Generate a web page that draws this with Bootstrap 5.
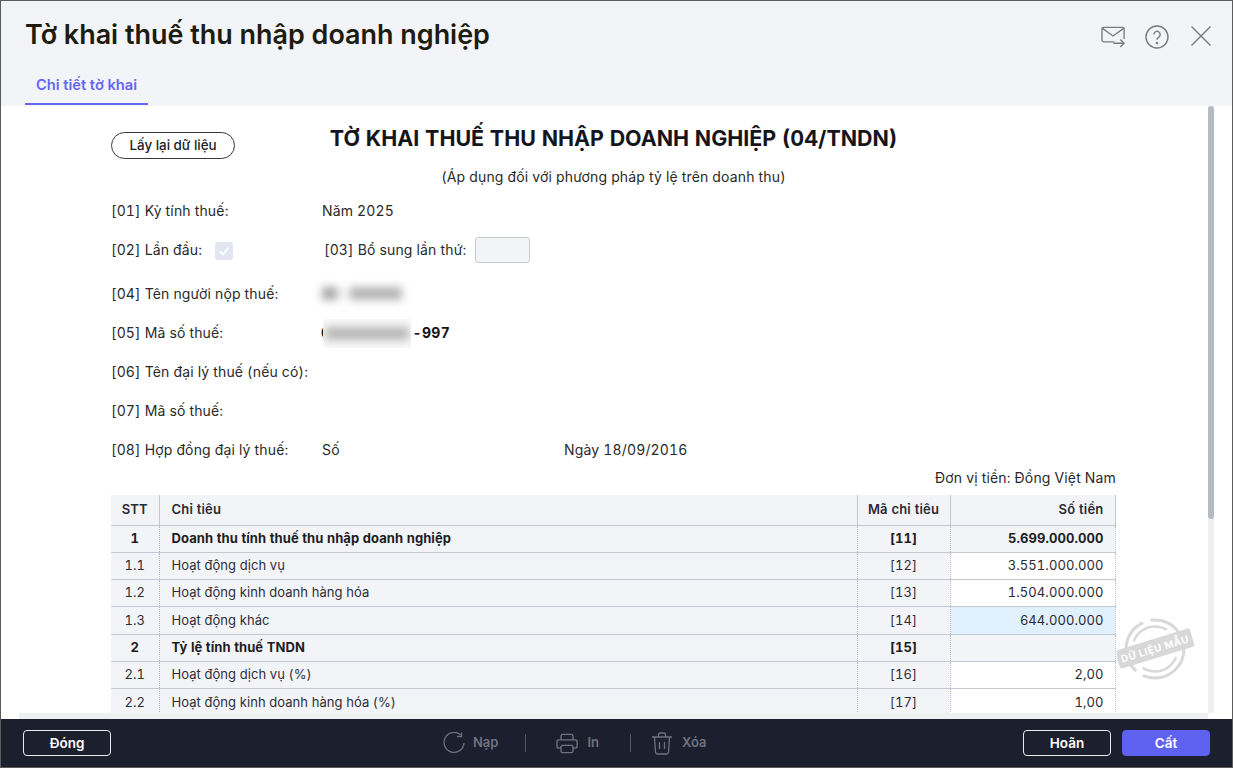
<!doctype html>
<html lang="vi">
<head>
<meta charset="utf-8">
<title>Tờ khai thuế thu nhập doanh nghiệp</title>
<link rel="stylesheet" href="https://cdn.jsdelivr.net/npm/bootstrap@5.3.0/dist/css/bootstrap.min.css">
<style>
html,body{height:100%;margin:0;overflow:hidden;background:#fff}
body{font-family:Inter,"Liberation Sans",sans-serif;font-size:14px;color:#212529}
.shell{height:768px;border:1px solid #5c5c5c;background:#fff}
.head-area{height:105px;background:#f3f4f8}
.title-row{padding:16px 20px 0 24px;height:68px}
.page-title{font-size:26.95px;font-weight:600;line-height:36px;margin:0;color:#1c1c10}
.tool-icon{color:#7a7a7a;display:block}
.tab-line{padding-left:24px}
.tab-item{width:123px;height:36px;border-bottom:2px solid #6366f1;color:#6366f1;font-size:14.7px;font-weight:600;line-height:32px;text-align:center;display:block;text-decoration:none}
.body-area{height:612px;overflow:hidden}
.sheet{width:1005px;margin-left:110px;padding-top:26px;color:#2a2a2a;letter-spacing:.16px;font-variant-numeric:tabular-nums}
.refetch{width:124px;height:27px;padding:0;border:1px solid #33363f;border-radius:14px;background:#fff;font-size:13.4px;font-weight:500;color:#1d1d1d;letter-spacing:0}
.refetch-slot{width:124px;flex:none}
.sheet-title{font-size:21.45px;font-weight:700;line-height:27px;margin:-7px 0 0;color:#15151c;text-align:center;letter-spacing:0}
.sheet-sub{text-align:center;line-height:20px;margin-top:8px;height:20px}
.form-line{height:39px;line-height:20px;padding-top:9px}
.line-first{height:37px;margin-top:5px}
.line-second{height:44px;padding-top:11px}
.line-third{height:41px;padding-top:11px}
.form-lab{width:211px;flex:none}
.check-off{width:18px;height:18px;border-radius:2px;background:#e3e6f0;margin:2px 0 0 13px}
.num-box{width:55px;height:26px;border:1px solid #c6cad3;border-radius:3px;background:#f3f4f8;margin:-3px 0 0 9px}
.blur-name{width:80px;height:13px;margin-top:3px;filter:blur(4px);background:linear-gradient(90deg,#a8a8a8 0 16%,#fff 24% 30%,#b4b4b4 38% 100%)}
.blur-wrap{position:relative;height:20px;width:129px;margin-left:-1px;font-weight:700;color:#15151c;letter-spacing:.3px}
.blur-zone{position:absolute;left:2px;top:-4px;width:88px;height:29px;background:#fafafa;overflow:hidden}
.blur-zone i{display:block;height:13px;margin:8px 2px 0;background:#b4b4b4;filter:blur(5px)}
.unit-line{text-align:right;line-height:20px;height:20px;margin-top:-2px}
.tax-grid{width:1004px;border-collapse:collapse;table-layout:fixed;margin:7px 0 0;letter-spacing:.07px;font-size:13px}
.tax-grid th,.tax-grid td{padding:0 11px 0 12px;height:27.3px;border-bottom:1px solid #c4c8d2;border-right:1px dotted #b8bcc6;vertical-align:middle;background:#f3f4f8;color:#2e2e38;font-weight:400}
.tax-grid th{height:30px;font-weight:600;border-right:1px solid #c4c8d2;color:#2a2a33;letter-spacing:.2px}
.tax-grid tr>:first-child{text-align:center;padding:0}
.tax-grid tr>:nth-child(3){text-align:center;padding:0}
.tax-grid tr>:last-child{text-align:right}
.tax-grid .sum-row td{font-weight:700;color:#1d1d24}
.tax-grid td.money-in{background:#fff;color:#2a2a33}
.tax-grid td.money-on{background:#e1f0fd;color:#2a2a33}
.bar-v{position:absolute;left:1207px;top:105px;width:6px;height:607px;background:#f0f0f0}
.bar-v i{display:block;height:413px;background:#b6bac4;border-radius:3px}
.bar-h{position:absolute;left:18px;top:712px;width:1189px;height:6px;background:#eff0f2}
.stamp{position:absolute;left:1116px;top:615px;color:#d8d8d8}
.foot-area{height:48px;background:#1c1f2e;padding:0 22px;position:absolute;left:0;top:718px;width:1231px}
.btn-dim{width:88px;height:26px;padding:0;font-size:13.5px;font-weight:600;line-height:22px;border-radius:4px}
.btn-line{border:1px solid #e9e9ee;color:#fff;background:transparent}
.btn-fill{border:1px solid #5f61f0;background:#5f61f0;color:#fff}
.mid-tools{color:#6f7280;font-size:13px;font-weight:600;position:absolute;left:442px;top:0;height:48px}
.v-sep{width:1px;height:18px;background:#545765}
</style>
</head>
<body>
<div class="shell position-relative">
  <header class="head-area">
    <div class="title-row d-flex justify-content-between">
      <h1 class="page-title">Tờ khai thuế thu nhập doanh nghiệp</h1>
      <div class="d-flex align-items-start" style="padding-top:8px;gap:21px">
        <svg class="tool-icon" style="margin-right:-2px" width="25" height="24" viewBox="0 0 26 24" fill="none" stroke="currentColor" stroke-width="1.4"><path d="M24 14V3.5A1.5 1.5 0 0 0 22.500 2H2.500A1.500 1.500 0 0 0 1 3.500V15.500A1.500 1.500 0 0 0 2.500 17H14"/><path d="M1.500 3L12.500 11L23.500 3"/><path d="M13 18.500H24M20 14.500L24 18.500L20 22.500"/></svg>
        <svg class="tool-icon" width="24" height="24" viewBox="0 0 24 24" fill="none" stroke="currentColor" stroke-width="1.4"><circle cx="12" cy="12" r="11"/><path d="M8.800 9.500A3.200 3.200 0 1 1 13.600 12.300C12.600 12.900 12 13.500 12 14.800"/><circle cx="12" cy="18" r=".6" fill="currentColor"/></svg>
        <svg class="tool-icon" width="22" height="22" viewBox="0 0 22 22" fill="none" stroke="currentColor" stroke-width="1.4"><path d="M1.500 1.500L20.500 20.500M20.500 1.500L1.500 20.500"/></svg>
      </div>
    </div>
    <div class="tab-line"><a class="tab-item" href="#">Chi tiết tờ khai</a></div>
  </header>
  <main class="body-area">
    <div class="sheet">
      <div class="d-flex">
        <div class="refetch-slot"><button type="button" class="refetch">Lấy lại dữ liệu</button></div>
        <div class="flex-grow-1"><h2 class="sheet-title">TỜ KHAI THUẾ THU NHẬP DOANH NGHIỆP (04/TNDN)</h2></div>
        <div class="refetch-slot"></div>
      </div>
      <div class="sheet-sub">(Áp dụng đối với phương pháp tỷ lệ trên doanh thu)</div>
      <div class="form-line line-first d-flex"><div class="form-lab">[01] Kỳ tính thuế:</div><div>Năm 2025</div></div>
      <div class="form-line line-second d-flex"><div class="d-flex form-lab"><span>[02] Lần đầu:</span><span class="check-off d-flex align-items-center justify-content-center"><svg width="12" height="12" viewBox="0 0 12 12" fill="none" stroke="#fff" stroke-width="1.800"><path d="M2 6.500L5 9.500L10.500 2.500"/></svg></span></div><div class="d-flex" style="margin-left:2px"><span>[03] Bổ sung lần thứ:</span><span class="num-box"></span></div></div>
      <div class="form-line line-third d-flex"><div class="form-lab">[04] Tên người nộp thuế:</div><div class="blur-name"></div></div>
      <div class="form-line d-flex"><div class="form-lab">[05] Mã số thuế:</div><div class="blur-wrap d-flex justify-content-between"><span>0</span><span class="blur-zone"><i></i></span><span>-997</span></div></div>
      <div class="form-line d-flex"><div class="form-lab">[06] Tên đại lý thuế (nếu có):</div></div>
      <div class="form-line d-flex"><div class="form-lab">[07] Mã số thuế:</div></div>
      <div class="form-line d-flex"><div class="form-lab">[08] Hợp đồng đại lý thuế:</div><div style="width:242px">Số</div><div>Ngày 18/09/2016</div></div>
      <div class="unit-line">Đơn vị tiền: Đồng Việt Nam</div>
      <table class="tax-grid">
        <colgroup><col style="width:48px"><col style="width:698px"><col style="width:93px"><col style="width:165px"></colgroup>
        <thead><tr><th>STT</th><th>Chỉ tiêu</th><th>Mã chỉ tiêu</th><th>Số tiền</th></tr></thead>
        <tbody>
          <tr class="sum-row"><td>1</td><td>Doanh thu tính thuế thu nhập doanh nghiệp</td><td>[11]</td><td>5.699.000.000</td></tr>
          <tr><td>1.1</td><td>Hoạt động dịch vụ</td><td>[12]</td><td class="money-in">3.551.000.000</td></tr>
          <tr><td>1.2</td><td>Hoạt động kinh doanh hàng hóa</td><td>[13]</td><td class="money-in">1.504.000.000</td></tr>
          <tr><td>1.3</td><td>Hoạt động khác</td><td>[14]</td><td class="money-on">644.000.000</td></tr>
          <tr class="sum-row"><td>2</td><td>Tỷ lệ tính thuế TNDN</td><td>[15]</td><td></td></tr>
          <tr><td>2.1</td><td>Hoạt động dịch vụ (%)</td><td>[16]</td><td class="money-in">2,00</td></tr>
          <tr><td>2.2</td><td>Hoạt động kinh doanh hàng hóa (%)</td><td>[17]</td><td class="money-in">1,00</td></tr>
        </tbody>
      </table>
    </div>
  </main>
  <div class="bar-v"><i></i></div>
  <div class="bar-h"></div>
  <svg class="stamp" width="80" height="66" viewBox="0 0 80 66" fill="none" stroke="currentColor">
    <circle cx="38" cy="33" r="29" stroke-width="3" stroke-dasharray="58 8"/>
    <circle cx="38" cy="33" r="22.500" stroke-width="2.500" stroke-dasharray="40 30" stroke-dashoffset="-8"/>
    <g transform="rotate(-17 38 33)">
      <rect x="-1" y="23" width="78" height="19" rx="2" fill="currentColor" stroke="none"/>
      <text x="38" y="36.500" text-anchor="middle" font-family="Inter,'Liberation Sans',sans-serif" font-size="10" font-weight="700" fill="#fff" stroke="none" letter-spacing=".5">DỮ LIỆU MẪU</text>
    </g>
  </svg>
  <footer class="foot-area d-flex align-items-center justify-content-between">
    <button type="button" class="btn btn-dim btn-line">Đóng</button>
    <div class="mid-tools d-flex align-items-center">
      <svg width="22" height="22" viewBox="0 0 22 22" fill="none" stroke="currentColor" stroke-width="1.300"><path d="M17.500 2.800A10 10 0 1 0 21 11"/><path d="M18.500 .5V4.500H14"/></svg>
      <span style="margin-left:8px">Nạp</span>
      <span class="v-sep" style="margin-left:27px"></span>
      <svg style="margin-left:30px" width="22" height="21" viewBox="0 0 24 22" fill="none" stroke="currentColor" stroke-width="1.500"><path d="M5.500 7V2.800C5.500 1.800 6.200 1 7.200 1H16.800C17.800 1 18.500 1.800 18.500 2.800V7"/><path d="M5.500 16H3A2 2 0 0 1 1 14V9A2 2 0 0 1 3 7H21A2 2 0 0 1 23 9V14A2 2 0 0 1 21 16H18.500"/><rect x="5.500" y="13" width="13" height="8" rx="1.500"/></svg>
      <span style="margin-left:9px">In</span>
      <span class="v-sep" style="margin-left:31px"></span>
      <svg style="margin-left:20px" width="22" height="23" viewBox="0 0 22 23" fill="none" stroke="currentColor" stroke-width="1.300"><path d="M1 5H21M7.500 5V2.500C7.500 1.600 8.100 1 9 1H13C13.900 1 14.500 1.600 14.500 2.500V5M3.500 5L4.500 20C4.600 21.200 5.500 22 6.500 22H15.500C16.500 22 17.400 21.200 17.500 20L18.500 5M8.500 10V17M13.500 10V17"/></svg>
      <span style="margin-left:9px">Xóa</span>
    </div>
    <div class="d-flex" style="gap:11px"><button type="button" class="btn btn-dim btn-line">Hoãn</button><button type="button" class="btn btn-dim btn-fill">Cất</button></div>
  </footer>
</div>
<script src="https://cdn.jsdelivr.net/npm/bootstrap@5.3.0/dist/js/bootstrap.bundle.min.js"></script>
</body>
</html>
